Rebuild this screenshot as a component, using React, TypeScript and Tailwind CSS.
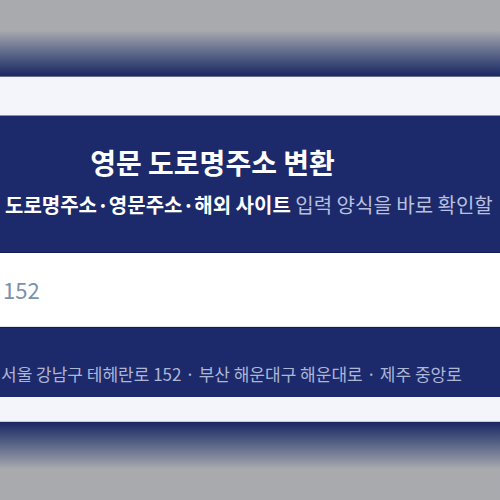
const font = { fontFamily: '"Noto Sans CJK KR", "Noto Sans", sans-serif' };

export default function App() {
  return (
    <div
      className="w-[500px] h-[500px] overflow-hidden bg-[#a9aaae] flex flex-col"
      style={font}
    >
      {/* top shade fading into the header */}
      <div className="h-[76px] shrink-0 bg-gradient-to-b from-[#a9aaae] from-40% to-[#1c2762]" />
      <div className="h-px shrink-0 bg-[#6a6f8c]" />
      <div className="h-[38px] shrink-0 bg-[#f4f5fa]" />
      <div className="h-px shrink-0 bg-[#8a90ac]" />

      {/* hero */}
      <section className="h-[136px] shrink-0 bg-[#1c2a6c] flex flex-col">
        <h1 className="w-[425px] mt-[27px] text-center text-[28px] leading-[38px] font-bold text-white">
          영문 도로명주소 변환
        </h1>
        <p className="mt-[10px] pl-[5px] whitespace-nowrap text-[20px] leading-[28px] text-[#b9c0df]">
          <span className="font-bold text-white">도로명주소·영문주소·해외 사이트</span>{" "}
          입력 양식을 바로 확인할
        </p>
      </section>

      {/* search input */}
      <div className="h-px shrink-0 bg-[#121c55]" />
      <div className="h-[74px] shrink-0 bg-white border-b border-[#dfe3f0] flex items-center">
        <span className="pl-[3px] text-[22px] text-[#7d90aa]">152</span>
      </div>

      {/* examples */}
      <div className="h-[70px] shrink-0 bg-[#1c2a6c] border-t border-[#121c55] flex items-center">
        <p className="ml-px mt-[22px] whitespace-nowrap text-[17px] text-[#aeb6d6]">
          서울 강남구 테헤란로 152 · 부산 해운대구 해운대로 · 제주 중앙로
        </p>
      </div>
      <div className="h-[25px] shrink-0 bg-[#f4f5fa] border-b border-[#c8ccd8]" />

      {/* bottom shade */}
      <div className="flex-1 bg-gradient-to-b from-[#1c2762] to-[#a9aaae] to-60%" />
    </div>
  );
}
